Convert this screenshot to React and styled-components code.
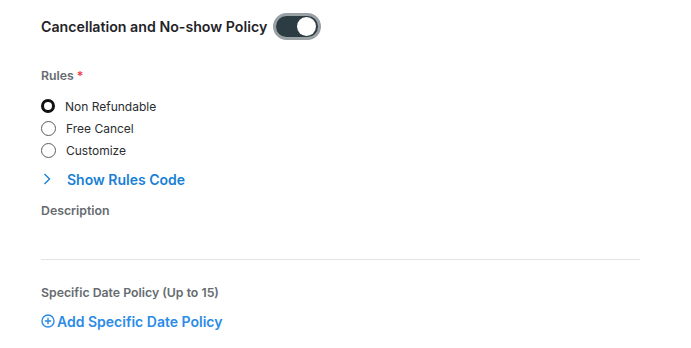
import styled, { createGlobalStyle } from "styled-components";

const Global = createGlobalStyle`
  body {
    margin: 0;
    background: #fff;
    font-family: Inter, "Noto Sans", sans-serif;
  }
`;

const Page = styled.div`
  width: 600px;
  padding: 12px 0 0 41px;
`;

const Header = styled.div`
  display: flex;
  align-items: center;
  gap: 9px;
  height: 28px;
`;

const Title = styled.h2`
  margin: 0;
  font-size: 14.2px;
  font-weight: 600;
  color: #1f2328;
`;

const Toggle = styled.div`
  width: 38px;
  height: 21px;
  border-radius: 14px;
  background: #2c3c43;
  border: 3px solid #9aa1a4;
  display: flex;
  align-items: center;
  justify-content: ${(p) => (p.$on ? "flex-end" : "flex-start")};
  padding: 0 2px;
  box-sizing: content-box;
  margin-left: -3px;
`;

const Knob = styled.div`
  width: 19px;
  height: 19px;
  border-radius: 50%;
  background: #fff;
`;

const Label = styled.div`
  font-size: 12.3px;
  font-weight: 600;
  color: #666b70;
  margin-top: ${(p) => p.$top || 0}px;
  line-height: 16px;
  span {
    color: #ef3a4b;
    margin-left: 3px;
  }
`;

const RadioList = styled.div`
  display: flex;
  flex-direction: column;
  gap: 6px;
  margin-top: 14px;
`;

const RadioRow = styled.label`
  display: flex;
  align-items: center;
  gap: 10px;
  height: 16px;
  font-size: 12px;
  color: #2a2d31;
`;

const Circle = styled.span`
  width: ${(p) => (p.$checked ? 8 : 13)}px;
  height: ${(p) => (p.$checked ? 8 : 13)}px;
  border-radius: 50%;
  border: ${(p) => (p.$checked ? "3.5px solid #111" : "1px solid #5a5f63")};
  box-sizing: content-box;
`;

const LinkRow = styled.div`
  display: flex;
  align-items: center;
  gap: ${(p) => p.$gap}px;
  margin-top: ${(p) => p.$top}px;
  font-size: 14px;
  font-weight: 600;
  color: ${(p) => p.$color};
  cursor: pointer;
  height: 18px;
`;

const Divider = styled.hr`
  border: none;
  border-top: 1px solid #e3e3e3;
  margin: 40px 0 0;
  width: 599px;
`;

export default function App() {
  return (
    <Page>
      <Global />
      <Header>
        <Title>Cancellation and No-show Policy</Title>
        <Toggle $on>
          <Knob />
        </Toggle>
      </Header>
      <Label $top={28}>
        Rules<span>*</span>
      </Label>
      <RadioList>
        <RadioRow>
          <Circle $checked />
          Non Refundable
        </RadioRow>
        <RadioRow>
          <Circle />
          Free Cancel
        </RadioRow>
        <RadioRow>
          <Circle />
          Customize
        </RadioRow>
      </RadioList>
      <LinkRow $top={12} $gap={16} $color="#1a7fd6">
        <svg width="8" height="12" viewBox="0 0 8 12" style={{ marginLeft: 2 }}>
          <path d="M1.5 1 L6.5 6 L1.5 11" fill="none" stroke="#1a7fd6" strokeWidth="1.4" />
        </svg>
        Show Rules Code
      </LinkRow>
      <Label $top={15}>Description</Label>
      <Divider />
      <Label $top={25}>Specific Date Policy (Up to 15)</Label>
      <LinkRow $top={11} $gap={2} $color="#2b8be6">
        <svg width="14" height="14" viewBox="0 0 14 14">
          <circle cx="7" cy="7" r="6" fill="none" stroke="#2b8be6" strokeWidth="1.4" />
          <path d="M7 3.8 V10.2 M3.8 7 H10.2" stroke="#2b8be6" strokeWidth="1.4" />
        </svg>
        Add Specific Date Policy
      </LinkRow>
    </Page>
  );
}
